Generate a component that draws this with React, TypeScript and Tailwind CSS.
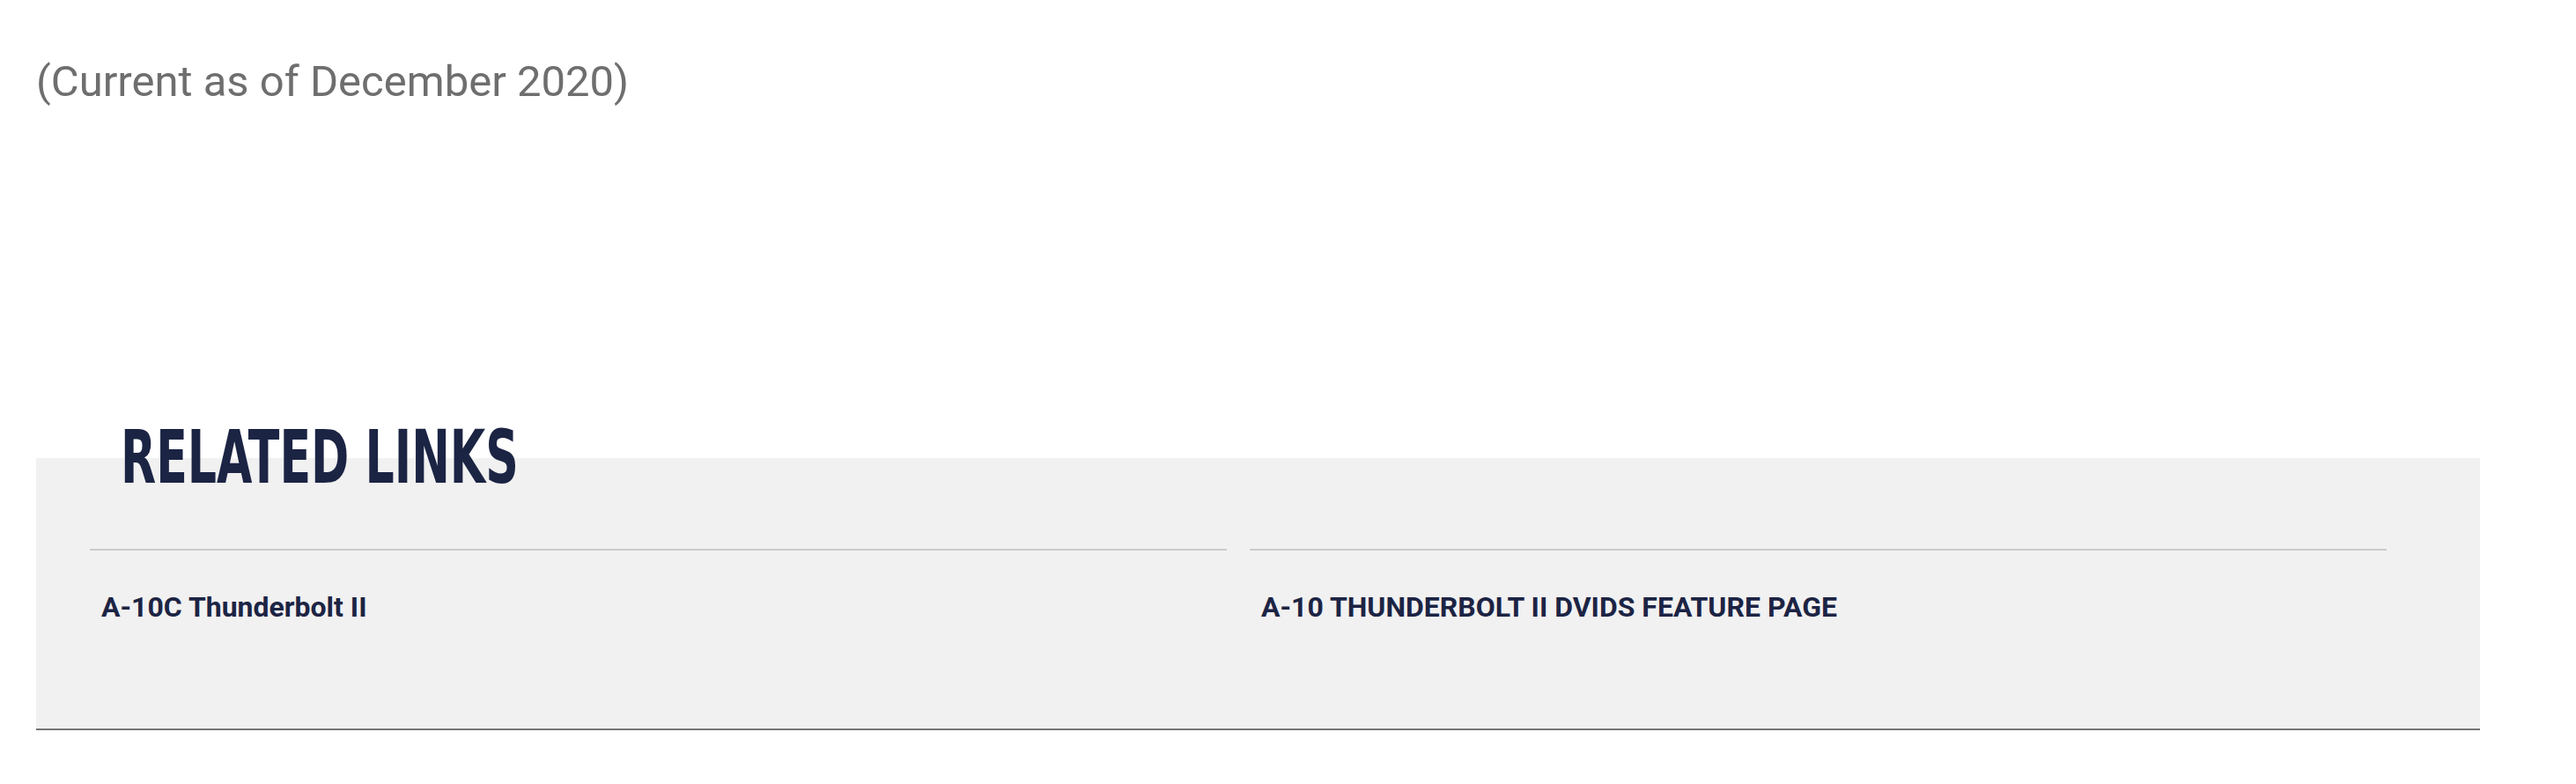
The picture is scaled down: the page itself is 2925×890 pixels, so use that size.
export default function App() {
  const links = ["A-10C Thunderbolt II", "A-10 THUNDERBOLT II DVIDS FEATURE PAGE"];

  return (
    <main className="min-h-screen bg-white pl-[41px] pt-[69px]">
      <p
        className="text-[49px] leading-[48px] text-[#6e6e6e]"
        style={{ fontFamily: "Roboto, 'Liberation Sans', sans-serif" }}
      >
        (Current as of December 2020)
      </p>

      <section className="mt-[403px] flex w-[2775px] flex-col bg-[#f1f1f1] border-b-2 border-[#767676] pb-[122px]">
        <h2
          className="-mt-[43px] ml-[96px] origin-left scale-x-[0.69] text-[84px] leading-[84px] font-bold uppercase text-[#1c2444] whitespace-nowrap"
          style={{ fontFamily: "'DejaVu Sans Condensed', 'Liberation Sans', sans-serif" }}
        >
          Related Links
        </h2>
        <div className="mt-[62px] grid grid-cols-2 gap-[26px] pl-[61px] pr-[106px]">
          {links.map((l) => (
            <div key={l} className="border-t-2 border-[#cbcbcb] pt-[48px] pl-[13px]">
              <a
                href="#"
                className="block text-[32px] leading-[32px] font-bold text-[#1c2444]"
                style={{ fontFamily: "Roboto, 'Liberation Sans', sans-serif" }}
              >
                {l}
              </a>
            </div>
          ))}
        </div>
      </section>
    </main>
  );
}
